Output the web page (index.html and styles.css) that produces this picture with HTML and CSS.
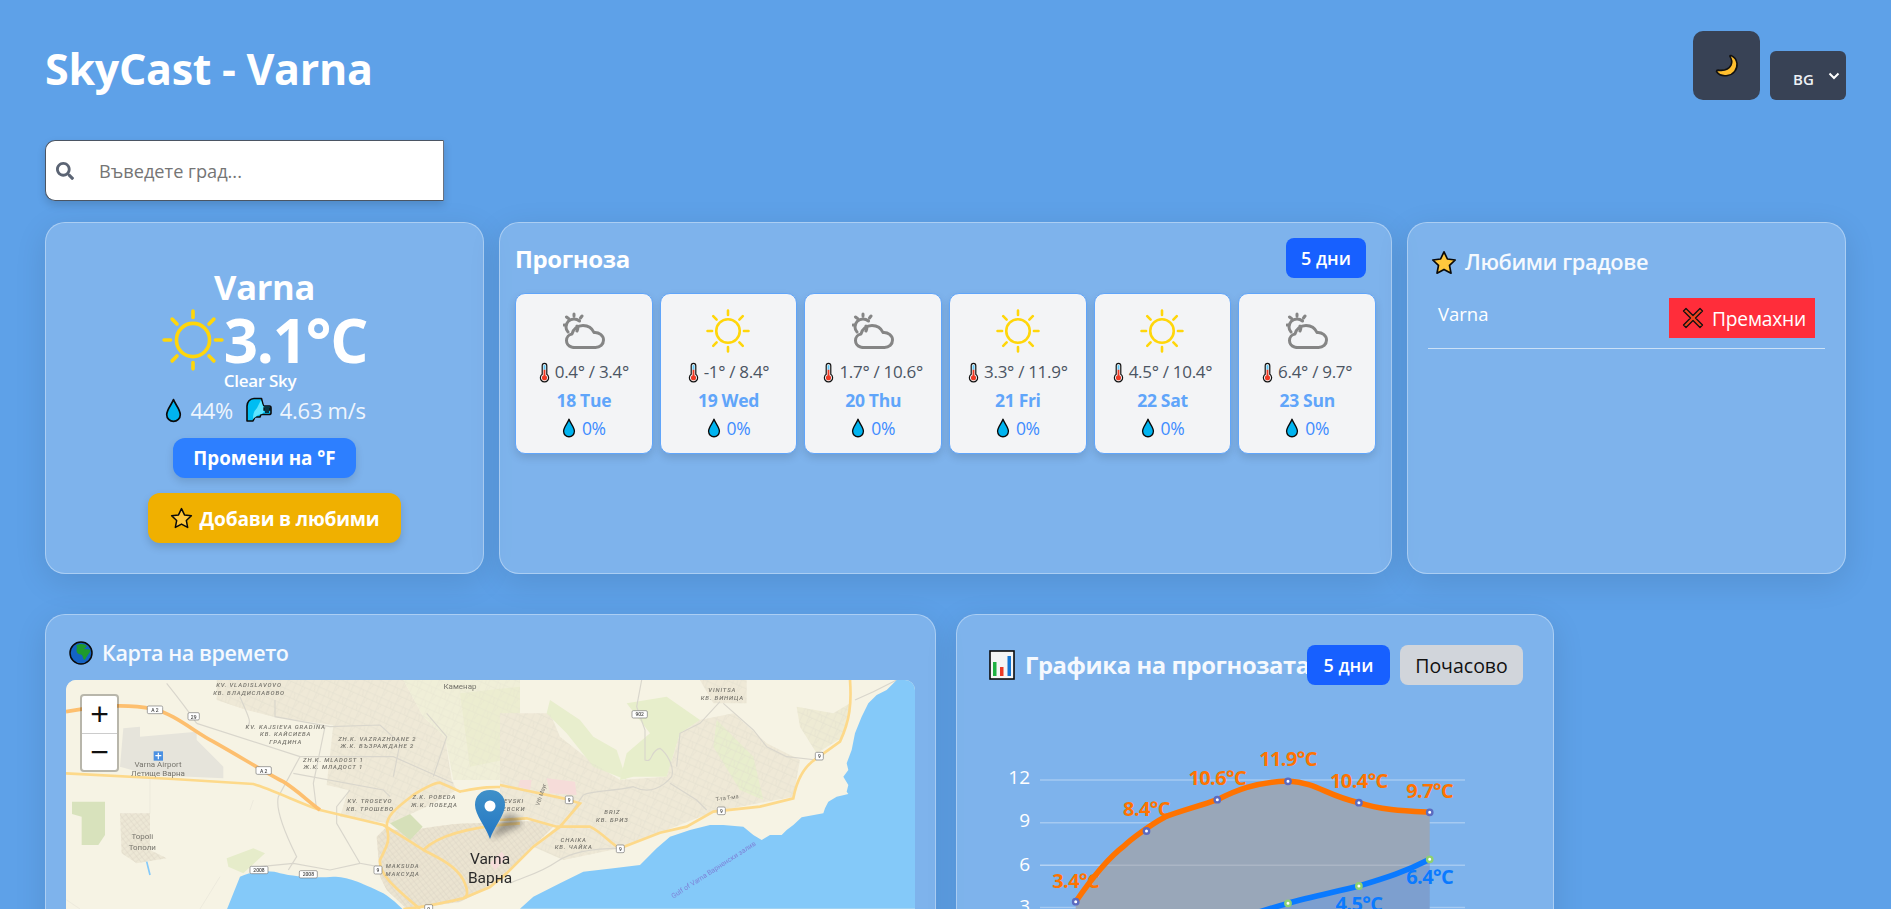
FILE: index.html
```html
<!DOCTYPE html>
<html lang="bg">
<head>
<meta charset="utf-8">
<title>SkyCast - Varna</title>
<link rel="stylesheet" href="styles.css">
</head>
<body>
<svg class="defs" width="0" height="0" aria-hidden="true">
  <defs>
    <symbol id="i-sun" viewBox="0 0 58 58">
      <g fill="none" stroke="#ffd60a" stroke-width="3.400" stroke-linecap="round">
        <circle cx="29" cy="29" r="15.500"/>
        <path d="M29 2v6M29 50v6M2 29h6M50 29h6M9.500 9.500l4.500 4.500M44 44l4.500 4.500M9.500 48.500l4.500-4.500M44 14l4.500-4.500"/>
      </g>
    </symbol>
    <symbol id="i-cloud" viewBox="0 0 42 38">
      <g fill="none" stroke="#858585" stroke-width="3" stroke-linecap="round" stroke-linejoin="round">
        <path d="M7 33c-3-1-5-3.500-5-6.500 0-3.500 2.500-6 5.500-6.500 1-5 5.500-8.500 11-8.500 5 0 9 2.500 11 7 5-.5 9.500 3 9.500 7.500 0 4.500-3.500 7.500-8 7.500H9z" transform="translate(1.500 2)"/>
        <path d="M5 20c-1.500-1.500-2-3.500-2-5 0-4.500 3.500-8 8-8 2 0 4 .8 5.500 2M11 2v2M3.500 5l2 1.500M1 13h2M19 4l-1.500 2M14 14c1 1 1 3 0 5"/>
      </g>
    </symbol>
    <symbol id="i-therm" viewBox="0 0 12 22">
      <path d="M3.500 3.500a2.500 2.500 0 0 1 5 0v9.500a4.500 4.500 0 1 1-5 0z" fill="#f4f4f4" stroke="#111" stroke-width="1.300"/>
      <rect x="5" y="3" width="2" height="5" fill="#5ac8fa"/>
      <rect x="5" y="8" width="2" height="7" fill="#ee3a24"/>
      <circle cx="6" cy="16.700" r="2.800" fill="#ee3a24"/>
    </symbol>
    <symbol id="i-drop" viewBox="0 0 16 24">
      <path d="M8 1.500C6.500 6 1.500 11 1.500 16a6.500 6.500 0 0 0 13 0C14.500 11 9.500 6 8 1.500z" fill="#00b4f0" stroke="#0a0a0a" stroke-width="1.600" stroke-linejoin="round"/>
    </symbol>
    <symbol id="i-wind" viewBox="0 0 27 26">
      <path d="M2 24V9c0-4 3-7.500 7-7.500h7.500c.7 3 1 5 2 7.500h6c1.200 0 1.500 1 1.500 2v5c0 1-.8 1.500-2 1.500h-8l-1 2.500h-5l-2 4z" fill="#00bdf2" stroke="#0a0a0a" stroke-width="1.600" stroke-linejoin="round"/>
      <path d="M8 22c0-5 1-8 4-11l4-8 2 6c2 1 3 4-1 8l-4 1z" fill="#5de5ff"/>
      <path d="M19 11h6v2h-6zM20 15h4" fill="none" stroke="#0a0a0a" stroke-width="1.300"/>
    </symbol>
    <symbol id="i-star" viewBox="0 0 26 25">
      <path d="M13 1.800l3.400 7.200 7.800 1-5.700 5.400 1.500 7.800-7-3.800-7 3.800 1.500-7.800L1.800 10l7.800-1z" fill="#ffc83d" stroke="#0a0a0a" stroke-width="1.700" stroke-linejoin="round"/>
    </symbol>
  </defs>
</svg>

<div class="app">
  <header class="topbar">
    <h1 class="title">SkyCast - Varna</h1>
    <div class="controls">
      <button class="theme-btn" type="button" aria-label="Тема">
        <svg class="moon" viewBox="0 0 24 24"><path d="M16 1.500c2.500 1 5.500 4 6 8 .5 6-3.500 11-9.500 12-4.500.7-9-1-11-4 0-1 .6-1.400 1.500-1.400 6 .8 11-1 13-5 1.300-3 .8-6-1-8.500-.3-.8.3-1.300 1-1.100z" fill="#ffbf2e" stroke="#111" stroke-width="1.600" stroke-linejoin="round"/></svg>
      </button>
      <div class="lang">
        <span class="lang-text">BG</span>
        <svg class="chev" viewBox="0 0 12 8"><path d="M1.500 1.500L6 6l4.500-4.500" fill="none" stroke="#fff" stroke-width="2"/></svg>
      </div>
    </div>
  </header>

  <div class="search">
    <svg class="search-icon" viewBox="0 0 512 512"><path fill="#5b6474" d="M505 442.700L405.300 343c-4.500-4.500-10.600-7-17-7H372c27.600-35.300 44-79.700 44-128C416 93.100 322.900 0 208 0S0 93.100 0 208s93.100 208 208 208c48.300 0 92.700-16.400 128-44v16.300c0 6.400 2.500 12.500 7 17l99.700 99.700c9.400 9.400 24.600 9.400 33.900 0l28.300-28.300c9.400-9.400 9.400-24.600.1-34zM208 336c-70.700 0-128-57.200-128-128 0-70.700 57.200-128 128-128 70.700 0 128 57.200 128 128 0 70.700-57.200 128-128 128z"/></svg>
    <input class="search-input" type="text" placeholder="Въведете град...">
  </div>

  <section class="top-grid">
    <article class="card current">
      <div class="city">Varna</div>
      <div class="temp-row">
        <svg class="sun-big"><use href="#i-sun"/></svg>
        <span class="temp">3.1°C</span>
      </div>
      <div class="desc">Clear Sky</div>
      <div class="stats">
        <svg class="ic-drop"><use href="#i-drop"/></svg><span>44%</span>
        <svg class="ic-wind"><use href="#i-wind"/></svg><span>4.63 m/s</span>
      </div>
      <button class="btn-unit" type="button">Промени на °F</button>
      <button class="btn-fav" type="button"><svg class="ic-star-sm"><use href="#i-star"/></svg>Добави в любими</button>
    </article>

    <article class="card forecast">
      <div class="forecast-head">
        <h2 class="h-forecast">Прогноза</h2>
        <button class="btn-blue" type="button">5 дни</button>
      </div>
      <div class="tiles">
        <div class="tile"><svg class="tile-cloud"><use href="#i-cloud"/></svg><div class="t-range"><svg class="ic-therm"><use href="#i-therm"/></svg>0.4° / 3.4°</div><div class="t-date">18 Tue</div><div class="t-rain"><svg class="ic-drop-sm"><use href="#i-drop"/></svg>0%</div></div>
        <div class="tile"><svg class="tile-sun"><use href="#i-sun"/></svg><div class="t-range"><svg class="ic-therm"><use href="#i-therm"/></svg>-1° / 8.4°</div><div class="t-date">19 Wed</div><div class="t-rain"><svg class="ic-drop-sm"><use href="#i-drop"/></svg>0%</div></div>
        <div class="tile"><svg class="tile-cloud"><use href="#i-cloud"/></svg><div class="t-range"><svg class="ic-therm"><use href="#i-therm"/></svg>1.7° / 10.6°</div><div class="t-date">20 Thu</div><div class="t-rain"><svg class="ic-drop-sm"><use href="#i-drop"/></svg>0%</div></div>
        <div class="tile"><svg class="tile-sun"><use href="#i-sun"/></svg><div class="t-range"><svg class="ic-therm"><use href="#i-therm"/></svg>3.3° / 11.9°</div><div class="t-date">21 Fri</div><div class="t-rain"><svg class="ic-drop-sm"><use href="#i-drop"/></svg>0%</div></div>
        <div class="tile"><svg class="tile-sun"><use href="#i-sun"/></svg><div class="t-range"><svg class="ic-therm"><use href="#i-therm"/></svg>4.5° / 10.4°</div><div class="t-date">22 Sat</div><div class="t-rain"><svg class="ic-drop-sm"><use href="#i-drop"/></svg>0%</div></div>
        <div class="tile"><svg class="tile-cloud"><use href="#i-cloud"/></svg><div class="t-range"><svg class="ic-therm"><use href="#i-therm"/></svg>6.4° / 9.7°</div><div class="t-date">23 Sun</div><div class="t-rain"><svg class="ic-drop-sm"><use href="#i-drop"/></svg>0%</div></div>
      </div>
    </article>

    <article class="card favourites">
      <h2 class="h-section"><svg class="ic-star"><use href="#i-star"/></svg>Любими градове</h2>
      <div class="fav-row">
        <span class="fav-name">Varna</span>
        <button class="btn-remove" type="button">
          <svg class="ic-x" viewBox="0 0 22 22"><path d="M4 1.500L11 8.500l7-7L20.500 4l-7 7 7 7-2.500 2.500-7-7-7 7L1.500 18l7-7-7-7z" fill="#f0431d" stroke="#111" stroke-width="1.300" stroke-linejoin="round"/></svg>Премахни
        </button>
      </div>
    </article>
  </section>

  <section class="bottom-row">
    <article class="card map-card">
      <h2 class="h-section h-map">
        <svg class="ic-globe" viewBox="0 0 24 24"><circle cx="12" cy="12" r="11" fill="#1463c4" stroke="#0a0a0a" stroke-width="1.500"/><path d="M7 4.500c2-1.500 6-2 8.500-1 2 .8 3 2 1.500 3l-2 1c1 1 4 .5 5.500 1 1.500 1 .5 3-1 4.500-1 2-2.500 3-3 5-.8 1.500-2 .5-2.500-1-.5-2-.5-3-2-3.500-2.500 0-4.500-1.500-4.500-4 0-2 1-3.500-.5-5.500z" fill="#1e9a2d"/></svg>
        Карта на времето
      </h2>
      <div class="map">
        <svg class="map-svg" viewBox="66 680 849 300" preserveAspectRatio="xMinYMin slice">
          <defs>
            <pattern id="streets" width="46" height="46" patternUnits="userSpaceOnUse" patternTransform="rotate(24)">
              <path d="M0 8h46M0 27h46M9 0v46M31 0v46M18 8l5 19M40 27l-6 19" fill="none" stroke="#e0dbcc" stroke-width="1.200"/>
            </pattern>
            <pattern id="streets2" width="26" height="26" patternUnits="userSpaceOnUse" patternTransform="rotate(-38)">
              <path d="M0 6h26M0 18h26M7 0v26M19 0v26" fill="none" stroke="#d8d2c2" stroke-width="1.300"/>
            </pattern>
            <linearGradient id="pin" x1="0" y1="0" x2="0" y2="1"><stop offset="0" stop-color="#3f90c9"/><stop offset="1" stop-color="#2377c3"/></linearGradient>
            <filter id="soft"><feGaussianBlur stdDeviation="3"/></filter>
          </defs>
          <rect x="66" y="680" width="849" height="300" fill="#f6f3e4"/>

          <g transform="translate(40 610) scale(.33333)">
            <path d="M530 210H1090L1150 320 1215 380 1235 510 1250 540 1160 590 1050 640 900 620 925 540 860 525 880 345 700 320 620 300 530 270z" fill="#efe9d7"/>
            <path d="M1090 210H1440V510L1240 510 1215 380 1150 320z" fill="#f0efd8"/>
            <path d="M1260 250L1440 230V440L1290 470z" fill="#ecedd0"/>
            <path d="M530 210H1090L1150 320 1215 380 1235 510 1250 540 1160 590 1050 640 900 620 925 540 860 525 880 345 700 320 620 300 530 270z" fill="url(#streets)"/>
            <path d="M1090 210H1440V510L1240 510 1215 380 1150 320z" fill="url(#streets)" opacity=".6"/>
            <path d="M1010 680L1040 650C1090 680 1180 640 1300 640L1560 630 1400 790 1350 831 1260 876 1100 897 1040 840 1020 800z" fill="#ebe4d1"/>
            <path d="M1010 680L1040 650C1090 680 1180 640 1300 640L1560 630 1400 790 1350 831 1260 876 1100 897 1040 840 1020 800z" fill="url(#streets2)"/>
            <path d="M1050 640L1110 612 1148 650 1110 690z" fill="#d6e0b9"/>
            <path d="M1350 760L1385 725 1400 745 1365 780z" fill="#f6dcd9"/>
            <path d="M96 575H195V675L175 705H125V620L96 612z" fill="#d8e2bc"/>
            <path d="M560 745L640 715 675 730 610 790 565 770z" fill="#e6ecca"/>
            <path d="M240 610H330V720L380 745 290 760 245 730z" fill="#ede8d6"/>
            <path d="M240 610H330V720L380 745 290 760 245 730z" fill="url(#streets2)"/>
            <path d="M250 355L300 350 300 380 470 365 470 390 550 470 550 505 330 495 240 470z" fill="#e6e4db"/>
            <path d="M320 755L330 795" stroke="#84c9f9" stroke-width="5" fill="none"/>
            <g fill="none" stroke="#d9d6cc" stroke-width="3.500">
              <path d="M470 340L780 440 1060 440 1240 520"/>
              <path d="M600 260C620 310 640 340 620 350M705 270V320L870 350 1020 345 1080 400 1060 500"/>
              <path d="M855 350L820 520 830 600M780 440L715 560C705 600 740 680 770 740L745 780"/>
              <path d="M760 490L1030 540 1050 560M930 540L890 590 890 640 960 760 1015 770"/>
              <path d="M380 220C420 270 450 310 470 340M1180 500L1220 380 1160 310"/>
              <path d="M660 770L760 760 870 780 960 760"/>
            </g>
            <g fill="none" stroke="#e8e5d9" stroke-width="2"><path d="M330 500V610M540 800L480 897M80 870L120 897M640 570L630 600"/></g>
            <path d="M78 490L400 507 640 522C700 540 780 580 840 600L1030 645C1070 670 1120 700 1150 720 1200 745 1250 770 1270 810 1285 840 1285 860 1270 865 1200 880 1170 890 1090 897" fill="none" stroke="#fdd98a" stroke-width="8"/>
            <path d="M1040 650C1040 620 1060 600 1120 555 1160 530 1190 518 1200 518 1230 530 1260 545 1260 545 1310 535 1350 525 1440 535M1040 650C1050 690 1045 700 1020 750 1015 790 1060 830 1140 897M1150 720C1190 680 1280 650 1440 640M1400 790L1350 831 1270 865" fill="none" stroke="#fdd98a" stroke-width="8"/>
            <path d="M78 305L120 298C200 285 280 285 340 297 400 310 470 370 520 395 600 440 680 490 730 515 770 540 800 570 840 600" fill="none" stroke="#fdbf6f" stroke-width="11"/>
            <path d="M600 800C640 780 700 780 720 790 760 800 830 805 880 800 920 800 960 815 1030 850 1060 870 1070 880 1090 900H560z" fill="#84c9f9"/>
            <g class="shield"><rect x="322" y="288" width="46" height="23" rx="4"/><text x="345" y="306">A 2</text><rect x="648" y="470" width="46" height="23" rx="4"/><text x="671" y="488">A 2</text><rect x="444" y="308" width="34" height="22" rx="4"/><text x="461" y="326">29</text><rect x="630" y="769" width="54" height="22" rx="4"/><text x="657" y="786">2008</text><rect x="778" y="782" width="54" height="22" rx="4"/><text x="805" y="799">2008</text><rect x="1002" y="768" width="24" height="24" rx="4"/><text x="1014" y="786">9</text><rect x="1154" y="884" width="24" height="24" rx="4"/><text x="1166" y="902">9</text></g>
            <rect x="341" y="424" width="28" height="28" fill="#4a90e2"/><path d="M355 428v20M346 437h18" stroke="#fff" stroke-width="3.500"/>
            <g class="ml-q">
              <text x="627" y="232">KV. VLADISLAVOVO</text><text x="627" y="255">КВ. ВЛАДИСЛАВОВО</text>
              <text x="737" y="357">KV. KAJSIEVA GRADINA</text><text x="737" y="379">КВ. КАЙСИЕВА</text><text x="737" y="402">ГРАДИНА</text>
              <text x="1012" y="393">ZH.K. VAZRAZHDANE 2</text><text x="1012" y="415">Ж.К. ВЪЗРАЖДАНЕ 2</text>
              <text x="880" y="456">ZH.K. MLADOST 1</text><text x="880" y="478">Ж.К. МЛАДОСТ 1</text>
              <text x="990" y="580">KV. TROSEVO</text><text x="990" y="602">КВ. ТРОШЕВО</text>
              <text x="1183" y="568">Z.K. POBEDA</text><text x="1183" y="590">Ж.К. ПОБЕДА</text>
              <text x="1088" y="775">MAKSUDA</text><text x="1088" y="797">МАКСУДА</text>
            </g>
            <g class="ml-town">
              <text x="1260" y="237">Каменар</text>
              <text x="354" y="472">Varna Airport</text><text x="354" y="499">Летище Варна</text>
              <text x="307" y="686">Topoli</text><text x="307" y="719">Тополи</text>
            </g>
          </g>

          <g transform="translate(500 670) scale(.33333)">
            <path d="M0 130L150 130 180 200 280 280 360 330 500 320 540 190 600 150 700 130 800 220 900 270 880 380 640 425 500 480 360 535 270 470 170 470 80 445 0 450z" fill="#efe9d7"/>
            <path d="M170 470H270C310 490 330 520 360 535L190 570 100 530z" fill="#efe9d7"/>
            <path d="M600 30H740V100H640z" fill="#efe9d7"/>
            <path d="M890 110L1000 130 1050 100 1030 200 950 250 900 170z" fill="#eeebd4"/>
            <path d="M150 90L240 150 280 200 350 240 380 330 280 290 200 190 140 130z" fill="#e8eecd"/>
            <path d="M380 100L500 80 600 150 540 190 500 320 400 320 360 330 380 250 450 190z" fill="#e7eecb"/>
            <path d="M650 150L760 260 790 390 720 360 640 230z" fill="#e8eecd"/>
            <path d="M0 130L150 130 180 200 280 280 360 330 500 320 540 190 600 150 700 130 800 220 900 270 880 380 640 425 500 480 360 535 270 470 170 470 80 445 0 450z" fill="url(#streets)"/>
            <path d="M170 470H270C310 490 330 520 360 535L190 570 100 530z" fill="url(#streets)"/>
            <path d="M890 110L1000 130 1050 100 1030 200 950 250 900 170zM600 30H740V100H640z" fill="url(#streets)"/>
            <path d="M140 325L225 335 230 375 150 370zM60 330L95 330 90 360 55 350z" fill="#f6dcd9"/>
            <g fill="none" stroke="#d9d6cc" stroke-width="3.500">
              <path d="M425 30L410 110 435 180 435 270C460 280 450 240 480 235 500 250 525 290 515 320 490 350 450 375 400 350 340 365 280 360 250 375L205 440"/>
              <path d="M660 95L600 160 540 190 530 290M670 100L760 180 800 230 860 260 950 270"/>
              <path d="M510 340L590 390 620 420M1190 30L1120 65 1065 90"/>
              <path d="M360 535C300 535 220 540 170 575 120 610 70 620 30 640"/>
            </g>
            <path d="M0 345L190 385 240 400 180 470 100 530 20 610 0 630M0 450L80 445 170 470 270 470C310 490 330 520 360 535L480 488 560 470 640 425 780 410 880 385C890 330 910 290 950 265L1020 215C1050 150 1055 100 1050 30" fill="none" stroke="#fdd98a" stroke-width="8"/>
            <path d="M1190 30L1160 60 1130 75 1105 100 1085 140 1065 190 1055 240 1040 280 1045 300 1030 320 1045 345 1040 365 1045 372 1010 380 985 395 975 415 970 430 905 442 880 465 860 480 845 495 810 495 785 510 760 495 730 470 670 465 630 465 570 480 510 500 470 535 420 585 340 595 250 605 180 640 100 680 60 716H1320V30z" fill="#84c9f9"/>
            <g class="shield"><rect x="396" y="122" width="46" height="22" rx="4"/><text x="419" y="139">902</text><rect x="196" y="378" width="23" height="23" rx="4"/><text x="207.500" y="395">9</text><rect x="652" y="411" width="24" height="23" rx="4"/><text x="664" y="428">9</text><rect x="946" y="247" width="24" height="23" rx="4"/><text x="958" y="264">9</text><rect x="349" y="525" width="24" height="23" rx="4"/><text x="361" y="542">9</text></g>
            <g class="ml-q">
              <text x="667" y="67">VINITSA</text><text x="667" y="90">КВ. ВИНИЦА</text>
              <text x="337" y="432">BRIZ</text><text x="337" y="455">КВ. БРИЗ</text>
              <text x="221" y="515">CHAIKA</text><text x="221" y="538">КВ. ЧАЙКА</text>
              <text x="42" y="400">EVSKI</text><text x="42" y="424">ЕВСКИ</text>
            </g>
            <text class="ml-road" transform="translate(118 408) rotate(-72)">Vth Mayr</text>
            <text class="ml-sea" transform="translate(520 686) rotate(-33)">Gulf of Varna Варненски залив</text>
            <text class="ml-road" transform="translate(648 394) rotate(-8)">Т-та Т-ма</text>
          </g>

          <path d="M490 839L520 826C524 820 515 814 506 814z" fill="#222" opacity=".4" filter="url(#soft)"/>
          <path d="M490 839C486 827 475 815 475 805 475 796 481 790 490 790S505 796 505 805C505 815 494 827 490 839z" fill="url(#pin)"/>
          <circle cx="490" cy="806" r="5.500" fill="#fff"/>
          <text class="ml-city" x="490" y="864">Varna</text>
          <text class="ml-city" x="490" y="883">Варна</text>
        </svg>
        <div class="zoom-ctl">
          <span class="zoom-btn">+</span>
          <span class="zoom-btn">−</span>
        </div>
      </div>
    </article>

    <article class="card chart-card">
      <div class="chart-head">
        <h2 class="h-chart">
          <svg class="ic-bars" viewBox="0 0 26 30"><rect x="1" y="1" width="24" height="28" fill="#f5f5f5" stroke="#0a0a0a" stroke-width="1.600"/><rect x="4" y="12" width="3.500" height="14" fill="#1fb141"/><rect x="11" y="17" width="3.500" height="9" fill="#ea3a25"/><rect x="18.500" y="6" width="3.500" height="20" fill="#1477d4"/></svg>
          Графика на прогнозата
        </h2>
        <button class="btn-blue btn-chart" type="button">5 дни</button>
        <button class="btn-grey" type="button">Почасово</button>
      </div>
      <svg class="chart-svg" viewBox="1000 700 500 300">
        <path d="M1040 780H1465M1040 822.700H1465M1040 865.300H1465M1040 907.500H1465" stroke="#fff" stroke-opacity=".3" stroke-width="1.500"/>
        <path d="M1075.700 901.700C1092 878 1108 858 1124 846 1130 840 1150 825 1165 817 1180 811 1200 806 1217.300 799.700 1235 791 1255 782 1288 781 1318 783 1325 795 1358.900 802.700 1380 810 1405 811 1429.700 812.300V859.300C1405 872 1385 878 1358.900 886 1340 891 1310 897 1288 903.300 1260 911 1240 918 1217.300 926 1190 945 1160 960 1146.500 964L1075.700 944z" fill="#99a7b9"/>
        <path d="M1429.700 859.300C1405 872 1385 878 1358.900 886 1340 891 1310 897 1288 903.300 1260 911 1240 918 1217.300 926V1000H1429.700z" fill="#7d9fcf"/>
        <path d="M1040 865.300H1429.700" stroke="#fff" stroke-opacity=".18" stroke-width="1.500"/>
        <path d="M1075.700 901.700C1092 878 1108 858 1124 846 1130 840 1150 825 1165 817 1180 811 1200 806 1217.300 799.700 1235 791 1255 782 1288 781 1318 783 1325 795 1358.900 802.700 1380 810 1405 811 1429.700 812.300" fill="none" stroke="#ff7300" stroke-width="5.500"/>
        <path d="M1429.700 859.300C1405 872 1385 878 1358.900 886 1340 891 1310 897 1288 903.300 1260 911 1240 918 1217.300 926" fill="none" stroke="#0a7aff" stroke-width="5.500"/>
        <g class="dot-h"><circle cx="1075.700" cy="901.700" r="2.700"/><circle cx="1146.500" cy="831" r="2.700"/><circle cx="1217.300" cy="799.700" r="2.700"/><circle cx="1288" cy="781.300" r="2.700"/><circle cx="1358.900" cy="802.700" r="2.700"/><circle cx="1429.700" cy="812.300" r="2.700"/></g>
        <g class="dot-l"><circle cx="1288" cy="903.300" r="2.700"/><circle cx="1358.900" cy="886" r="2.700"/><circle cx="1429.700" cy="859.300" r="2.700"/></g>
        <g class="lab-h"><text x="1075.700" y="888">3.4°C</text><text x="1146.500" y="816">8.4°C</text><text x="1217.300" y="785">10.6°C</text><text x="1288" y="766">11.9°C</text><text x="1358.900" y="788">10.4°C</text><text x="1429.700" y="798">9.7°C</text></g>
        <g class="lab-l"><text x="1358.900" y="911">4.5°C</text><text x="1429.700" y="884">6.4°C</text></g>
        <g class="lab-y"><text x="1030" y="784">12</text><text x="1030" y="827">9</text><text x="1030" y="871">6</text><text x="1030" y="913">3</text></g>
      </svg>
    </article>
  </section>
</div>
</body>
</html>
```

FILE: styles.css
```css
* { box-sizing: border-box; }
html, body { height: 100%; margin: 0; overflow: hidden; }
body {
  background: #5ea1e8;
  color: #fff;
  font-family: "Open Sans", "Noto Sans", sans-serif;
}
button { font-family: inherit; border: 0; cursor: pointer; }
h1, h2 { margin: 0; }
.defs { position: absolute; }
.app { padding: 31px 45px 0; }

.topbar { display: flex; justify-content: space-between; align-items: flex-end; height: 69px; margin-bottom: 40px; }
.title { font-size: 43px; font-weight: 700; line-height: 1; align-self: center; letter-spacing: -.3px; padding-top: 6px; }
.controls { display: flex; align-items: flex-end; gap: 10px; }
.theme-btn { width: 67px; height: 69px; background: #384255; border-radius: 10px; display: flex; align-items: center; justify-content: center; }
.moon { width: 24px; height: 24px; }
.lang { width: 76px; height: 49px; background: #384255; border-radius: 6px; display: flex; align-items: flex-end; padding: 0 7px 12px 23px; justify-content: space-between; position: relative; }
.lang-text { font-size: 15px; font-weight: 600; color: #eef1f5; line-height: 18px; }
.chev { width: 12px; height: 8px; position: absolute; top: 21px; right: 6px; }

.search { width: 399px; height: 61px; background: #fff; border: 1px solid #4b5563; border-right-color: #6b7280; border-radius: 10px 0 0 10px; display: flex; align-items: center; box-shadow: 0 4px 8px rgba(0,0,0,.15); margin-bottom: 21px; padding-left: 10px; }
.search-icon { width: 18px; height: 18px; flex: none; }
.search-input { flex: 1; min-width: 0; border: 0; outline: 0; background: transparent; margin-left: 23px; padding-top: 2px; font: 400 18.200px "Open Sans", sans-serif; color: #333; }
.search-input::placeholder { color: #757575; opacity: 1; }

.card { background: rgba(255,255,255,.2); border: 1px solid rgba(255,255,255,.35); border-radius: 20px; box-shadow: 0 8px 32px rgba(0,0,0,.1); }

.top-grid { display: grid; grid-template-columns: 439px 893px 439px; column-gap: 15px; height: 352px; margin-bottom: 40px; }

.current { display: flex; flex-direction: column; align-items: center; padding-top: 41px; }
.city { font-size: 34.500px; font-weight: 700; line-height: 46px; letter-spacing: -.3px; }
.temp-row { display: flex; align-items: center; height: 60px; margin-top: 0; gap: 0; }
.sun-big { width: 62px; height: 62px; }
.temp { font-size: 60px; font-weight: 700; line-height: 60px; letter-spacing: -1.200px; }
.desc { font-size: 17px; font-weight: 600; line-height: 22px; margin-top: 0; margin-right: 9px; letter-spacing: -.3px; }
.stats { display: flex; align-items: center; font-size: 22px; line-height: 28px; margin-top: 4px; margin-left: 2px; color: #eef5fd; letter-spacing: -.3px; }
.ic-drop { width: 17px; height: 25px; margin-right: 8px; }
.ic-wind { width: 27px; height: 26px; margin: 0 8px 0 12px; }
.btn-unit { width: 183px; height: 40px; background: #2d7fff; color: #fff; font-size: 18.800px; font-weight: 700; border-radius: 12px; margin-top: 14px; box-shadow: 0 4px 8px rgba(0,0,0,.12); padding: 0; }
.btn-fav { width: 253px; height: 50px; margin-left: 20px; background: #f0b000; color: #fff; font-size: 19.200px; font-weight: 700; border-radius: 12px; margin-top: 15px; box-shadow: 0 4px 8px rgba(0,0,0,.15); display: flex; align-items: center; justify-content: center; gap: 7px; letter-spacing: -.2px; padding: 0; }
.ic-star-sm { width: 23px; height: 22px; }

.forecast { padding: 15px; }
.forecast-head { display: flex; justify-content: space-between; align-items: center; height: 40px; padding-right: 10px; margin-bottom: 15px; }
.h-forecast { font-size: 24px; font-weight: 700; letter-spacing: -.4px; }
.btn-blue { height: 40px; width: 80px; background: #1760ff; color: #fff; font-size: 18px; font-weight: 600; border-radius: 8px; padding: 0; }
.tiles { display: grid; grid-template-columns: repeat(6, 1fr); gap: 7px; }
.tile { height: 161px; background: #f3f4f6; border: 1px solid #60a5fa; border-radius: 10px; box-shadow: 0 4px 8px rgba(0,0,0,.12); display: flex; flex-direction: column; align-items: center; padding-top: 15px; }
.tile-sun { width: 44px; height: 44px; margin-bottom: 8px; }
.tile-cloud { width: 42px; height: 38px; margin: 3px 0 11px; }
.t-range { display: flex; align-items: center; gap: 5px; font-size: 17px; line-height: 22px; color: #4b5563; letter-spacing: -.3px; }
.ic-therm { width: 11px; height: 21px; }
.t-date { font-size: 17.500px; font-weight: 700; color: #60a5fa; line-height: 24px; margin-top: 5px; letter-spacing: -.3px; }
.t-rain { display: flex; align-items: center; gap: 6px; font-size: 17.500px; line-height: 24px; color: #3f8cff; margin-top: 4px; letter-spacing: -.3px; }
.ic-drop-sm { width: 14px; height: 20px; }

.favourites { padding: 25px 20px; }
.h-section { display: flex; align-items: center; font-size: 21.800px; font-weight: 600; line-height: 28px; color: #f5f9fe; letter-spacing: -.4px; }
.ic-star { width: 26px; height: 25px; margin: 0 8px 0 3px; }
.fav-row { display: flex; justify-content: space-between; align-items: flex-start; margin-top: 22px; padding: 0 10px 10px; border-bottom: 1px solid rgba(255,255,255,.6); }
.fav-name { font-size: 18.500px; line-height: 32px; }
.btn-remove { width: 146px; height: 40px; background: #ff2d3a; color: #fff; font-size: 19.200px; display: flex; align-items: center; gap: 8px; padding: 0 0 0 13px; letter-spacing: -.2px; }
.ic-x { width: 22px; height: 22px; }

.bottom-row { display: flex; gap: 20px; align-items: flex-start; }
.map-card { width: 891px; height: 420px; padding: 24px 20px 0; }
.h-map { margin: 0 0 13px 3px; font-size: 21.500px; }
.ic-globe { width: 24px; height: 24px; margin-right: 9px; }
.map { position: relative; height: 340px; border-radius: 10px; overflow: hidden; background: #f6f3e4; }
.map-svg { display: block; width: 849px; height: 300px; filter: blur(.35px); }
.zoom-ctl { position: absolute; left: 14px; top: 14px; width: 39px; background: #fff; border: 2px solid rgba(0,0,0,.25); border-radius: 4px; display: flex; flex-direction: column; background-clip: padding-box; }
.zoom-btn { height: 37px; display: flex; align-items: center; justify-content: center; color: #111; font: 400 32px "Liberation Sans", sans-serif; }
.zoom-btn + .zoom-btn { border-top: 1px solid #ccc; }

.shield rect { fill: #fff; stroke: #777; stroke-width: 2; }
.shield text { font: 500 15px Roboto, sans-serif; fill: #444; text-anchor: middle; }
.ml-q text { font: italic 500 18px Roboto, sans-serif; fill: #77756d; text-anchor: middle; letter-spacing: 2.600px; }
.ml-town text { font: 400 24px Roboto, sans-serif; fill: #77756d; text-anchor: middle; }
.ml-road { font: 400 17px Roboto, sans-serif; fill: #77756d; }
.ml-sea { font: 400 21px Roboto, sans-serif; fill: #7d84d8; }
.ml-city { font: 400 15.500px Roboto, sans-serif; fill: #2a2a2a; text-anchor: middle; }

.chart-card { width: 598px; height: 420px; padding: 30px 29px 0 32px; }
.chart-head { display: flex; align-items: center; }
.h-chart { display: flex; align-items: center; font-size: 23.800px; font-weight: 700; white-space: nowrap; width: 318px; letter-spacing: -.4px; color: #f5f9fe; }
.ic-bars { width: 26px; height: 30px; margin-right: 10px; flex: none; }
.btn-chart { width: 83px; }
.btn-grey { width: 123px; height: 40px; margin-left: 10px; background: #d1d5db; color: #111; font-size: 19.500px; border-radius: 8px; padding: 0; }
.chart-svg { display: block; width: 500px; height: 300px; margin: 15px 0 0 11px; overflow: hidden; }
.dot-h circle { fill: #fff; stroke: #5c6bc0; stroke-width: 2.400; }
.dot-l circle { fill: #fff; stroke: #8fd16f; stroke-width: 2.400; }
.lab-h text { font: 700 20px "Open Sans", sans-serif; fill: #ff7300; text-anchor: middle; letter-spacing: -.6px; }
.lab-l text { font: 700 20px "Open Sans", sans-serif; fill: #0a7aff; text-anchor: middle; letter-spacing: -.6px; }
.lab-y text { font: 400 19px "Open Sans", sans-serif; fill: #fff; text-anchor: end; }
```
